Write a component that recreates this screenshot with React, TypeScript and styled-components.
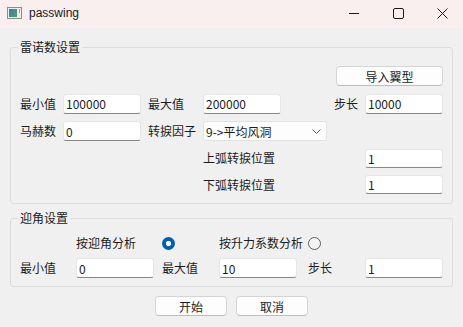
import React from "react";
import styled, { createGlobalStyle } from "styled-components";

const GlobalStyle = createGlobalStyle`
  html, body { margin: 0; padding: 0; background: #f0f0f0; }
  body {
    font-family: "Microsoft YaHei UI", "Noto Sans CJK SC", sans-serif;
    font-size: 12px;
    color: #1b1b1b;
  }
  * { box-sizing: border-box; }
`;

const Window = styled.div`
  width: 463px;
  height: 327px;
  background: #f0f0f0;
  overflow: hidden;
  display: flex;
  flex-direction: column;
`;

const TitleBar = styled.div`
  height: 28px;
  padding: 0 0 2px 7px;
  background: #f8efee;
  display: flex;
  align-items: center;
`;

const AppTitle = styled.span`
  margin-left: 7px;
  flex: 1;
  font-family: "Segoe UI", "Liberation Sans", sans-serif;
  font-size: 12px;
  color: #1a1a1a;
`;

const CaptionButton = styled.div<{ $w: number }>`
  width: ${(p) => p.$w}px;
  height: 100%;
  display: flex;
  align-items: center;
  justify-content: center;
`;

const Content = styled.div`
  padding: 11px 10px 0;
  display: flex;
  flex-direction: column;
`;

const GroupBox = styled.fieldset<{ $mt?: number }>`
  margin: ${(p) => p.$mt ?? 0}px 0 0;
  padding: 0;
  min-width: 0;
  border: 1px solid #dcdcdc;
  border-radius: 3px;
`;

const Legend = styled.legend`
  margin-left: 7px;
  padding: 0 2px;
  font-size: 12px;
  line-height: 16px;
  color: #1b1b1b;
`;

const ReynoldsGrid = styled.div`
  display: grid;
  grid-template-columns: 43px 78px 7px 55px 78px 46px 7px 31px 78px;
  grid-template-rows: 20px 20px 20px 19px 19px;
  row-gap: 7.5px;
  padding: 11px 9px 9px;
`;

const AngleGrid = styled.div`
  display: grid;
  grid-template-columns: 56px 78px 8px 57px 78px 11px 57px 78px;
  grid-template-rows: 18px 20px;
  row-gap: 6px;
  padding: 8px 9px 8px;
`;

const Label = styled.span<{ $at: string }>`
  grid-area: ${(p) => p.$at};
  align-self: center;
  white-space: nowrap;
  line-height: 16px;
  color: #1b1b1b;
`;

const TextInput = styled.input<{ $at: string }>`
  grid-area: ${(p) => p.$at};
  width: 100%;
  height: 100%;
  margin: 0;
  padding: 0 0 0 2px;
  border: 1px solid #e6e6e6;
  border-bottom-color: #878787;
  border-radius: 3px;
  background: #ffffff;
  font-family: "Microsoft YaHei UI", "Noto Sans CJK SC", sans-serif;
  font-size: 12px;
  color: #1b1b1b;
  outline: none;
`;

const Combo = styled.div<{ $at: string }>`
  grid-area: ${(p) => p.$at};
  display: flex;
  align-items: center;
  justify-content: space-between;
  padding: 0 5px 0 2px;
  border: 1px solid #e2e2e2;
  border-radius: 3px;
  background: #fdfdfd;
  white-space: nowrap;
`;

const PushButton = styled.button<{ $at?: string; $w: number }>`
  ${(p) => (p.$at ? `grid-area: ${p.$at}; justify-self: end;` : "")}
  width: ${(p) => p.$w}px;
  height: 20px;
  margin: 0;
  padding: 0;
  border: 1px solid #d4d4d4;
  border-bottom-color: #bdbdbd;
  border-radius: 4px;
  background: #fdfdfd;
  font-family: "Microsoft YaHei UI", "Noto Sans CJK SC", sans-serif;
  font-size: 12px;
  color: #1b1b1b;
`;

const Radio = styled.span<{ $at: string; $checked?: boolean }>`
  grid-area: ${(p) => p.$at};
  align-self: center;
  width: 13px;
  height: 13px;
  border-radius: 50%;
  ${(p) =>
    p.$checked
      ? `background: radial-gradient(circle, #ffffff 0 2.4px, #005fb8 3px);`
      : `border: 1px solid #5e5e5e; background: #f4f4f4;`}
`;

const ButtonRow = styled.div`
  display: flex;
  justify-content: center;
  gap: 9px;
  margin-top: 9px;
`;

const AppIcon = () => (
  <svg width="15" height="12" viewBox="0 0 15 12">
    <defs>
      <linearGradient id="ig" x1="0" y1="0" x2="1" y2="1">
        <stop offset="0" stopColor="#3f78b8" />
        <stop offset="1" stopColor="#4aa36a" />
      </linearGradient>
    </defs>
    <rect x="0.5" y="0.5" width="14" height="11" fill="#eeeeee" stroke="#8c8c8c" />
    <rect x="2" y="2" width="8" height="8" fill="url(#ig)" />
    <rect x="12" y="2" width="1" height="4" fill="#9a9a9a" />
  </svg>
);

const Chevron = () => (
  <svg width="9" height="5" viewBox="0 0 9 5">
    <path d="M0.5 0.5 L4.5 4.5 L8.5 0.5" fill="none" stroke="#5a5a5a" strokeWidth="1" />
  </svg>
);

export default function App() {
  return (
    <>
      <GlobalStyle />
      <Window>
        <TitleBar>
          <AppIcon />
          <AppTitle>passwing</AppTitle>
          <CaptionButton $w={45}>
            <svg width="10" height="10" viewBox="0 0 10 10">
              <path d="M0 5.5 H10" stroke="#1a1a1a" strokeWidth="1" />
            </svg>
          </CaptionButton>
          <CaptionButton $w={45}>
            <svg width="11" height="11" viewBox="0 0 11 11">
              <rect x="0.5" y="0.5" width="10" height="10" rx="1.5" fill="none" stroke="#1a1a1a" strokeWidth="1" />
            </svg>
          </CaptionButton>
          <CaptionButton $w={42}>
            <svg width="11" height="11" viewBox="0 0 11 11">
              <path d="M0.5 0.5 L10.5 10.5 M10.5 0.5 L0.5 10.5" stroke="#1a1a1a" strokeWidth="1" />
            </svg>
          </CaptionButton>
        </TitleBar>

        <Content>
          <GroupBox>
            <Legend>雷诺数设置</Legend>
            <ReynoldsGrid>
              <PushButton $at="1 / 8 / 2 / 10" $w={107}>导入翼型</PushButton>

              <Label $at="2 / 1">最小值</Label>
              <TextInput $at="2 / 2" defaultValue="100000" readOnly />
              <Label $at="2 / 4">最大值</Label>
              <TextInput $at="2 / 5" defaultValue="200000" readOnly />
              <Label $at="2 / 8">步长</Label>
              <TextInput $at="2 / 9" defaultValue="10000" readOnly />

              <Label $at="3 / 1">马赫数</Label>
              <TextInput $at="3 / 2" defaultValue="0" readOnly />
              <Label $at="3 / 4">转捩因子</Label>
              <Combo $at="3 / 5 / 4 / 7">
                <span>9-&gt;平均风洞</span>
                <Chevron />
              </Combo>

              <Label $at="4 / 5 / 5 / 8">上弧转捩位置</Label>
              <TextInput $at="4 / 9" defaultValue="1" readOnly />

              <Label $at="5 / 5 / 6 / 8">下弧转捩位置</Label>
              <TextInput $at="5 / 9" defaultValue="1" readOnly />
            </ReynoldsGrid>
          </GroupBox>

          <GroupBox $mt={6}>
            <Legend>迎角设置</Legend>
            <AngleGrid>
              <Label $at="1 / 2 / 2 / 4">按迎角分析</Label>
              <Radio $at="1 / 4" $checked />
              <Label $at="1 / 5 / 2 / 7">按升力系数分析</Label>
              <Radio $at="1 / 7" />

              <Label $at="2 / 1">最小值</Label>
              <TextInput $at="2 / 2" defaultValue="0" readOnly />
              <Label $at="2 / 4">最大值</Label>
              <TextInput $at="2 / 5" defaultValue="10" readOnly />
              <Label $at="2 / 7">步长</Label>
              <TextInput $at="2 / 8" defaultValue="1" readOnly />
            </AngleGrid>
          </GroupBox>

          <ButtonRow>
            <PushButton $w={72}>开始</PushButton>
            <PushButton $w={72}>取消</PushButton>
          </ButtonRow>
        </Content>
      </Window>
    </>
  );
}
